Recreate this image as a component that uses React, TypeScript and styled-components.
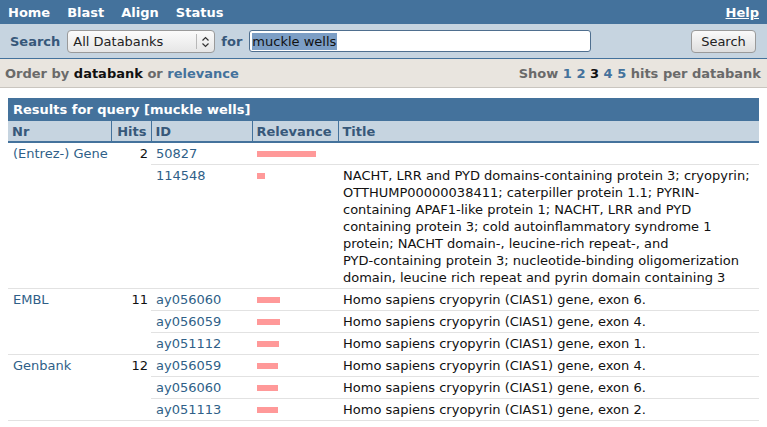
import React from "react";
import styled, { createGlobalStyle } from "styled-components";

const BLUE = "#44729c";
const PALE = "#c6d4e0";
const LINK = "#2f5f88";
const HEAD = "#37587a";

const GlobalStyle = createGlobalStyle`
  html, body { margin: 0; padding: 0; background: #fff; }
  body { font-family: "DejaVu Sans", Verdana, sans-serif; font-size: 13px; color: #111; }
`;

const NavBar = styled.div`
  display: flex;
  align-items: center;
  height: 24px;
  background: ${BLUE};
  padding: 0 8px;
  gap: 17px;
`;

const NavLink = styled.a<{ $right?: boolean }>`
  color: #fff;
  font-weight: bold;
  text-decoration: ${(p) => (p.$right ? "underline" : "none")};
  margin-left: ${(p) => (p.$right ? "auto" : "0")};
  cursor: pointer;
`;

const SearchBar = styled.div`
  display: flex;
  align-items: center;
  height: 34px;
  background: ${PALE};
  border-bottom: 1px solid ${BLUE};
  padding: 0 11px 0 10px;
`;

const Label = styled.span<{ $gap: number }>`
  font-weight: bold;
  color: ${HEAD};
  margin-right: ${(p) => p.$gap}px;
`;

const SelectBox = styled.div`
  position: relative;
  box-sizing: border-box;
  width: 148px;
  height: 23px;
  border: 1px solid #9a9a9a;
  border-radius: 4px;
  background: linear-gradient(#fbfbfb, #e6e6e6);
  display: flex;
  align-items: center;
  padding-left: 5px;
  color: #222;
  margin-right: 6px;
`;

const SelectDivider = styled.span`
  position: absolute;
  right: 17px;
  top: 3px;
  bottom: 3px;
  width: 1px;
  background: #b8b8b8;
`;

const SelectArrows = styled.svg`
  position: absolute;
  right: 4px;
  top: 5px;
`;

const SearchInput = styled.div`
  box-sizing: border-box;
  width: 342px;
  height: 22px;
  border: 1px solid #4f6f8f;
  border-radius: 3px;
  background: #fff;
  display: flex;
  align-items: center;
  padding-left: 2px;
`;

const Selected = styled.span`
  background: #7c9ec5;
  color: #111;
  line-height: 17px;
  padding-right: 1px;
`;

const Button = styled.button`
  margin-left: auto;
  box-sizing: border-box;
  width: 65px;
  height: 23px;
  border: 1px solid #9a9a9a;
  border-radius: 4px;
  background: linear-gradient(#fafafa, #dedede);
  font-family: "DejaVu Sans", sans-serif;
  font-size: 13px;
  color: #222;
  padding: 0;
`;

const OrderBar = styled.div`
  display: flex;
  align-items: center;
  justify-content: space-between;
  height: 28px;
  background: #e9e5df;
  border-bottom: 1px solid #c9c5bf;
  padding: 0 6px 0 5px;
  font-weight: bold;
  color: #6a6a6a;
`;

const Opt = styled.a<{ $active?: boolean }>`
  color: ${(p) => (p.$active ? "#111" : BLUE)};
  text-decoration: none;
  cursor: pointer;
`;

const Table = styled.table`
  margin: 10px 8px 0 8px;
  width: 751px;
  border-collapse: collapse;
  table-layout: fixed;
`;

const Body = styled.tbody`
  border-bottom: 1px solid #e2e2e2;
`;

const Caption = styled.th`
  background: ${BLUE};
  color: #fff;
  font-weight: bold;
  text-align: left;
  height: 23px;
  padding: 0 5px;
`;

const HeadCell = styled.th<{ $right?: boolean }>`
  background: ${PALE};
  color: ${HEAD};
  font-weight: bold;
  text-align: ${(p) => (p.$right ? "right" : "left")};
  height: 20px;
  padding: 0 4px 0 4px;
  border-left: 1px solid ${BLUE};
  border-bottom: 2px solid ${BLUE};
  &:first-child { border-left: none; }
`;

const Row = styled.tr`
  border-top: 1px solid #e2e2e2;
`;

const Cell = styled.td<{ $link?: boolean; $right?: boolean }>`
  vertical-align: top;
  padding: 2px ${(p) => (p.$right ? 3 : 4)}px 2px 5px;
  line-height: 17px;
  color: ${(p) => (p.$link ? LINK : "#111")};
  text-align: ${(p) => (p.$right ? "right" : "left")};
`;

const GroupCell = styled(Cell)`
  border-top: 1px solid #e2e2e2;
  white-space: nowrap;
`;

const NoWrap = styled.span`
  white-space: nowrap;
`;

const Bar = styled.div`
  height: 6px;
  margin-top: 6px;
  background: #ff9999;
`;

type Hit = { id: string; rel: number; title: React.ReactNode };
type Group = { name: string; hits: number; items: Hit[] };

const groups: Group[] = [
  {
    name: "(Entrez-) Gene",
    hits: 2,
    items: [
      { id: "50827", rel: 59, title: "" },
      {
        id: "114548",
        rel: 8,
        title: (
          <>
            NACHT, LRR and PYD domains-containing protein 3; cryopyrin; OTTHUMP00000038411; caterpiller protein
            1.1; PYRIN-containing APAF1-like protein 1; NACHT, LRR and PYD containing protein 3; cold
            autoinflammatory syndrome 1 protein; NACHT domain-, leucine-rich repeat-, and{" "}
            <NoWrap>PYD-containing</NoWrap> protein 3; nucleotide-binding oligomerization domain, leucine rich
            repeat and pyrin domain containing 3
          </>
        ),
      },
    ],
  },
  {
    name: "EMBL",
    hits: 11,
    items: [
      { id: "ay056060", rel: 23, title: "Homo sapiens cryopyrin (CIAS1) gene, exon 6." },
      { id: "ay056059", rel: 23, title: "Homo sapiens cryopyrin (CIAS1) gene, exon 4." },
      { id: "ay051112", rel: 22, title: "Homo sapiens cryopyrin (CIAS1) gene, exon 1." },
    ],
  },
  {
    name: "Genbank",
    hits: 12,
    items: [
      { id: "ay056059", rel: 21, title: "Homo sapiens cryopyrin (CIAS1) gene, exon 4." },
      { id: "ay056060", rel: 21, title: "Homo sapiens cryopyrin (CIAS1) gene, exon 6." },
      { id: "ay051113", rel: 21, title: "Homo sapiens cryopyrin (CIAS1) gene, exon 2." },
    ],
  },
];

export default function App() {
  return (
    <>
      <GlobalStyle />
      <NavBar>
        <NavLink>Home</NavLink>
        <NavLink>Blast</NavLink>
        <NavLink>Align</NavLink>
        <NavLink>Status</NavLink>
        <NavLink $right>Help</NavLink>
      </NavBar>
      <SearchBar>
        <Label $gap={7}>Search</Label>
        <SelectBox>
          All Databanks
          <SelectDivider />
          <SelectArrows width="9" height="12" viewBox="0 0 9 12">
            <path d="M1.5 4.5 L4.5 1.5 L7.5 4.5 M1.5 7.5 L4.5 10.5 L7.5 7.5" fill="none" stroke="#333" strokeWidth="1.2" />
          </SelectArrows>
        </SelectBox>
        <Label $gap={7}>for</Label>
        <SearchInput>
          <Selected>muckle wells</Selected>
        </SearchInput>
        <Button>Search</Button>
      </SearchBar>
      <OrderBar>
        <span>
          Order by <Opt $active>databank</Opt> or <Opt>relevance</Opt>
        </span>
        <span>
          Show <Opt>1</Opt> <Opt>2</Opt> <Opt $active>3</Opt> <Opt>4</Opt> <Opt>5</Opt> hits per databank
        </span>
      </OrderBar>
      <Table>
        <colgroup>
          <col style={{ width: 103 }} />
          <col style={{ width: 40 }} />
          <col style={{ width: 101 }} />
          <col style={{ width: 86 }} />
          <col />
        </colgroup>
        <thead>
          <tr>
            <Caption colSpan={5}>Results for query [muckle wells]</Caption>
          </tr>
          <tr>
            <HeadCell>Nr</HeadCell>
            <HeadCell $right>Hits</HeadCell>
            <HeadCell>ID</HeadCell>
            <HeadCell>Relevance</HeadCell>
            <HeadCell>Title</HeadCell>
          </tr>
        </thead>
        <Body>
          {groups.map((g, gi) =>
            g.items.map((h, i) => (
              <Row key={`${gi}-${i}`}>
                {i === 0 && (
                  <>
                    <GroupCell $link rowSpan={g.items.length}>
                      {g.name}
                    </GroupCell>
                    <GroupCell $right rowSpan={g.items.length}>
                      {g.hits}
                    </GroupCell>
                  </>
                )}
                <Cell $link>{h.id}</Cell>
                <Cell>
                  <Bar style={{ width: h.rel }} />
                </Cell>
                <Cell>{h.title}</Cell>
              </Row>
            ))
          )}
        </Body>
      </Table>
    </>
  );
}
